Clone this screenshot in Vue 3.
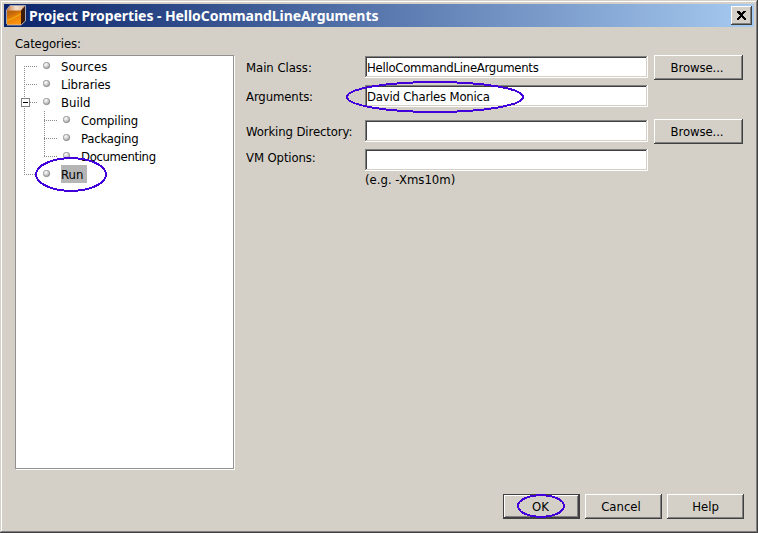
<script setup>
const nodes = [
  { text: 'Sources' },
  { text: 'Libraries' },
  { text: 'Build', toggle: true },
  { text: 'Compiling', child: true },
  { text: 'Packaging', child: true },
  { text: 'Documenting', child: true },
  { text: 'Run', selected: true },
]
const fields = [
  { label: 'Main Class:', value: 'HelloCommandLineArguments', browse: true },
  { label: 'Arguments:', value: 'David Charles Monica', ring: true },
  { label: 'Working Directory:', value: '', browse: true },
  { label: 'VM Options:', value: '' },
]
const rowClass = ['main-class', 'arguments', 'directory', 'options']
</script>

<template>
  <div class="window">
    <header class="titlebar">
      <svg class="cube" width="21" height="21" viewBox="0 0 21 21">
        <defs>
          <linearGradient id="front" x1="0" y1="0" x2="0.4" y2="1">
            <stop offset="0" stop-color="#b8600f" />
            <stop offset=".4" stop-color="#c0680c" />
            <stop offset=".6" stop-color="#e67b05" />
            <stop offset="1" stop-color="#ff9510" />
          </linearGradient>
          <linearGradient id="top" x1="0" y1="0" x2="1" y2="0">
            <stop offset="0" stop-color="#c87e49" />
            <stop offset=".5" stop-color="#f5e0cc" />
            <stop offset="1" stop-color="#e0b898" />
          </linearGradient>
        </defs>
        <path d="M1 5 4 1H19V16L15 20H1Z" fill="url(#front)" />
        <path d="M1 5.500 4 1H19L15 5.500Z" fill="url(#top)" />
        <path d="M15 5.500 19 1V16L15 20Z" fill="#3d1c0e" />
        <path d="M1 15 8 12 15 8V9.500L8 13.500 1 16.500Z" fill="#e9a812" />
        <path d="M.5 19V5L4 .5H19.500V16L15 20H1" fill="none" stroke="#c4c6cc" stroke-width=".8" />
      </svg>
      <h1>Project Properties - HelloCommandLineArguments</h1>
      <button class="close" aria-label="Close">
        <svg width="9" height="9" viewBox="0 0 9 9" shape-rendering="crispEdges">
          <path d="M0 0h3v1h1v1h1V1h1V0h3v1H8v1H7v1H6v1H6v1h1v1h1v1h1v2H7V8H6V7H5V6H4v1H3v1H2v1H0V7h1V6h1V5h1V4H2V3H1V2H0Z" />
        </svg>
      </button>
    </header>

    <main>
      <section class="categories">
        <div class="caption"><span>Categories:</span></div>
        <div class="tree">
          <svg class="guides" width="60" height="140" viewBox="0 0 60 140" shape-rendering="crispEdges">
            <path d="M8.500 10V119M8 10.500H22M8 28.500H22M8 46.500H22M8 118.500H22M28.500 55V101M28 64.500H42M28 82.500H42M28 100.500H42" />
          </svg>
          <div v-for="n in nodes" :key="n.text" class="node" :class="{ child: n.child }">
            <i v-if="n.toggle" class="toggle"></i>
            <svg class="dot" width="8" height="8" viewBox="0 0 8 8">
              <defs>
                <radialGradient id="ball" cx=".35" cy=".3" r=".7">
                  <stop offset="0" stop-color="#fff" />
                  <stop offset=".65" stop-color="#ccc" />
                  <stop offset="1" stop-color="#999" />
                </radialGradient>
              </defs>
              <circle cx="3.500" cy="3.500" r="3.200" fill="url(#ball)" stroke="#8c8c8c" stroke-width=".8" />
            </svg>
            <span class="name" :class="['n-' + n.text.toLowerCase(), { selected: n.selected }]">{{ n.text }}</span>
            <svg v-if="n.selected" class="ring run-ring" width="72" height="35" shape-rendering="crispEdges">
              <ellipse cx="36" cy="17.500" rx="35" ry="16.300" />
            </svg>
          </div>
        </div>
      </section>

      <section class="form">
        <div v-for="(f, i) in fields" :key="f.label" class="field" :class="rowClass[i]">
          <label><span>{{ f.label }}</span></label>
          <div class="input">
            <span>{{ f.value }}</span>
            <svg v-if="f.ring" class="ring arg-ring" width="178" height="32" shape-rendering="crispEdges">
              <ellipse cx="89" cy="16" rx="88" ry="15" />
            </svg>
          </div>
          <button v-if="f.browse" class="btn browse"><span>Browse...</span></button>
        </div>
        <div class="hint"><span>(e.g. -Xms10m)</span></div>
      </section>
    </main>

    <footer>
      <button class="btn default">
        <span class="ok">OK</span>
        <svg class="ring ok-ring" width="48" height="24" shape-rendering="crispEdges">
          <ellipse cx="24" cy="12" rx="23" ry="10.800" />
        </svg>
      </button>
      <button class="btn"><span class="cancel">Cancel</span></button>
      <button class="btn"><span class="help">Help</span></button>
    </footer>
  </div>
</template>

<style>
body { margin: 0; background: #d4d0c8; }
</style>

<style scoped>
* { box-sizing: border-box; }
.window {
  width: 758px;
  height: 533px;
  padding: 4px 4px 14px;
  display: flex;
  flex-direction: column;
  background: #d4d0c8;
  box-shadow: inset -1px -1px #404040, inset 1px 1px #d4d0c8, inset -2px -2px #808080, inset 2px 2px #fff;
  font: 13px/16px "DejaVu Sans Condensed", "DejaVu Sans", sans-serif;
  font-stretch: condensed;
  color: #000;
  white-space: nowrap;
  overflow: hidden;
}
.titlebar {
  height: 23px;
  flex: none;
  display: flex;
  align-items: center;
  padding: 0 2px;
  background: linear-gradient(90deg, #0a246a, #a6caf0);
}
.cube { flex: none; }
h1 {
  margin: 0 auto 0 2px;
  font: bold 14px/20px "Noto Sans", sans-serif;
  letter-spacing: -.06px;
  color: #fff;
}
button { font: inherit; color: inherit; padding: 0; border: 0; }
.close {
  width: 21px;
  height: 19px;
  display: flex;
  align-items: center;
  justify-content: center;
  background: #d4d0c8;
  box-shadow: inset -1px -1px #404040, inset 1px 1px #fff, inset -2px -2px #808080;
}
main { flex: 1; display: flex; padding: 9px 10px 0 11px; }
.categories { width: 220px; flex: none; }
.caption { height: 19px; line-height: 16px; letter-spacing: -.1px; }
.tree {
  position: relative;
  width: 219px;
  height: 414px;
  padding-top: 1px;
  background: #fff;
  border: 1px solid #919191;
  box-shadow: 1px 1px #fff;
}
.guides { position: absolute; left: 0; top: 0; }
.guides path { fill: none; stroke: #8a8a8a; stroke-dasharray: 1 1; }
.node { position: relative; height: 18px; display: flex; align-items: center; padding-left: 27px; }
.node.child { padding-left: 47px; }
.dot { flex: none; margin-right: 10px; }
.name { height: 18px; line-height: 20px; }
.n-compiling, .n-packaging { letter-spacing: -.2px; }
.n-documenting { letter-spacing: -.36px; }
.n-libraries { letter-spacing: -.1px; }
.selected { width: 26px; background: #b5b5b5; }
.toggle { position: absolute; left: 5px; top: 5px; width: 9px; height: 9px; border: 1px solid #808080; background: #fff; }
.toggle::after { content: ""; display: block; height: 1px; margin: 3px 1px; background: #000; }
.form { flex: 1; padding: 19px 0 0 10px; }
.field { display: flex; height: 25px; }
.field label { width: 120px; flex: none; padding: 5px 0 0 1px; letter-spacing: -.11px; }
.main-class label { letter-spacing: -.05px; }
.input {
  position: relative;
  width: 283px;
  height: 22px;
  flex: none;
  margin-top: 1px;
  padding: 4px 2px 0;
  background: #fff;
  letter-spacing: -.27px;
  box-shadow: inset -1px -1px #fff, inset 1px 1px #808080, inset -2px -2px #d4d0c8, inset 2px 2px #404040;
}
.arguments .input { letter-spacing: -.2px; }
.main-class { margin-bottom: 4px; }
.arguments { margin-bottom: 10px; }
.directory { margin-bottom: 4px; }
.options label { padding-top: 2px; }
.btn {
  position: relative;
  width: 77px;
  height: 25px;
  display: flex;
  align-items: center;
  justify-content: center;
  background: #d4d0c8;
  box-shadow: inset -1px -1px #404040, inset 1px 1px #fff, inset -2px -2px #808080;
}
.btn.default {
  box-shadow: inset 0 0 0 1px #404040, inset -2px -2px #404040, inset 2px 2px #fff, inset -3px -3px #808080;
}
.browse { width: 89px; margin-left: 6px; padding-right: 3px; letter-spacing: -.1px; }
.ok { margin-right: 2px; }
.cancel { margin-right: 5px; }
.hint { margin: -1px 0 0 120px; }
footer { display: flex; justify-content: flex-end; gap: 5px; padding-right: 10px; flex: none; }
.ring { position: absolute; z-index: 2; overflow: visible; }
.ring ellipse { fill: none; stroke: #4200db; stroke-width: 2; }
.run-ring { left: 19px; top: -8px; }
.arg-ring { left: -19px; top: -4px; }
.ok-ring { left: 14px; top: 0; }
</style>
